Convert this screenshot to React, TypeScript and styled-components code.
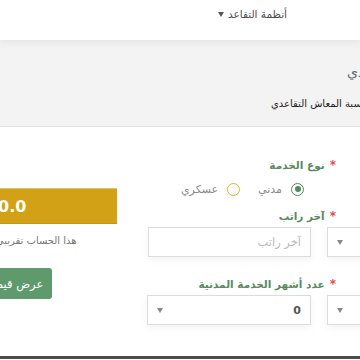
import React, { FC } from 'react';
import styled, { createGlobalStyle } from 'styled-components';

const GlobalStyle = createGlobalStyle`
  html, body {
    margin: 0;
    padding: 0;
    background: #ffffff;
  }
  body {
    font-family: "DejaVu Sans", "Noto Sans", sans-serif;
  }
`;

const Page = styled.div`
  position: relative;
  width: 360px;
  height: 360px;
  overflow: hidden;
  direction: rtl;
  background: #ffffff;
`;

const Header = styled.header`
  position: relative;
  z-index: 2;
  height: 40px;
  background: #ffffff;
  box-shadow: 0 2px 8px rgba(0, 0, 0, 0.07);
  display: flex;
  align-items: flex-start;
  padding-right: 73px;
  box-sizing: border-box;
`;

const NavItem = styled.div`
  display: flex;
  align-items: center;
  gap: 4px;
  margin-top: 6px;
  font-size: 10.5px;
  line-height: 16px;
  color: #4f4f4f;
`;

const Caret = styled.span`
  width: 0;
  height: 0;
  border-left: 3.5px solid transparent;
  border-right: 3.5px solid transparent;
  border-top: 5px solid #555555;
  margin-top: 1px;
`;

const TitleBand = styled.section`
  height: 87px;
  background: #f3f3f3;
  box-sizing: border-box;
  padding-top: 23px;
  border-bottom: 1px solid #e2e2e2;
`;

/* title whose start is cut by the right edge: anchored at its left end */
const TitleLine = styled.div<{ $left: number }>`
  direction: ltr;
  display: flex;
  padding-left: ${(p) => p.$left}px;
  white-space: nowrap;
`;

const Title = styled.span`
  flex-shrink: 0;
  direction: rtl;
  font-size: 14px;
  line-height: 18px;
  color: #5f6d7a;
`;

const SubTitle = styled.div`
  margin-top: 15px;
  margin-right: -11px;
  white-space: nowrap;
  font-size: 10px;
  line-height: 16px;
  color: #1f1f1f;
`;

const Panel = styled.main`
  height: 229px;
  background: #ffffff;
  display: flex;
  align-items: flex-start;
  gap: 30px;
`;

const FormCol = styled.div`
  flex-shrink: 0;
  width: 240px;
  margin-right: -27px;
  padding-top: 30px;
  display: flex;
  flex-direction: column;
`;

const Label = styled.div<{ $gap: number }>`
  margin-top: ${(p) => p.$gap}px;
  padding-right: 51px;
  font-size: 10.5px;
  line-height: 16px;
  font-weight: bold;
  color: #5b8a62;
  display: flex;
  align-items: center;
  gap: 5px;
`;

const Star = styled.span`
  color: #e24b4b;
  font-size: 12px;
`;

const RadioRow = styled.div`
  margin-top: 8px;
  padding-right: 83px;
  display: flex;
  align-items: center;
  gap: 18px;
  height: 16px;
`;

const Radio = styled.label`
  display: flex;
  align-items: center;
  gap: 9px;
  font-size: 11px;
  color: #888888;
`;

const RadioRing = styled.span<{ $color: string; $checked?: boolean }>`
  width: 11px;
  height: 11px;
  border-radius: 50%;
  border: 1.6px solid ${(p) => p.$color};
  display: flex;
  align-items: center;
  justify-content: center;

  &::after {
    content: '';
    display: ${(p) => (p.$checked ? 'block' : 'none')};
    width: 6px;
    height: 6px;
    border-radius: 50%;
    background: ${(p) => p.$color};
  }
`;

const FieldRow = styled.div`
  margin-top: 3px;
  display: flex;
  gap: 16px;
`;

const Box = styled.div<{ $width: number }>`
  width: ${(p) => p.$width}px;
  height: 30px;
  box-sizing: border-box;
  border: 1px solid #dcdcdc;
  background: #ffffff;
  box-shadow: 0 3px 8px rgba(0, 0, 0, 0.05);
  display: flex;
  align-items: center;
  justify-content: space-between;
  padding: 0 9px;
  font-size: 11px;
`;

const Placeholder = styled.span`
  color: #bbbbbb;
  font-size: 11.5px;
`;

const Value = styled.span`
  color: #555555;
  font-weight: bold;
`;

const Arrow = styled.span`
  width: 0;
  height: 0;
  border-left: 3px solid transparent;
  border-right: 3px solid transparent;
  border-top: 5px solid #888888;
`;

const ResultCol = styled.div`
  flex-shrink: 0;
  width: 240px;
  margin-top: 61px;
  display: flex;
  flex-direction: column;
  align-items: center;
`;

const ResultBox = styled.div`
  width: 100%;
  height: 36px;
  box-sizing: border-box;
  background: #d3a115;
  border-top: 1px solid #e4c266;
  border-bottom: 1px solid #c39510;
  display: flex;
  align-items: center;
  justify-content: center;
  gap: 4px;
  color: #ffffff;
  font-weight: bold;
`;

const Amount = styled.span`
  font-size: 16px;
  direction: ltr;
`;

const Currency = styled.span`
  font-size: 12px;
`;

const Note = styled.p`
  margin: 10px 0 0;
  font-size: 10px;
  line-height: 14px;
  color: #777777;
  white-space: nowrap;
`;

const ShowButton = styled.button`
  margin-top: 20px;
  width: 110px;
  height: 31px;
  border: none;
  border-radius: 3px;
  background: #5f9a6d;
  color: #ffffff;
  font-family: inherit;
  font-size: 11.5px;
  direction: rtl;
`;

const Footer = styled.div`
  height: 3px;
  background: #4d4d4d;
`;

const App: FC = () => {
  return (
    <>
      <GlobalStyle />
      <Page>
        <Header>
          <NavItem>
            أنظمة التقاعد
            <Caret />
          </NavItem>
        </Header>
        <TitleBand>
          <TitleLine $left={347}>
            <Title>التقاعدي</Title>
          </TitleLine>
          <SubTitle>حاسبة المعاش التقاعدي</SubTitle>
        </TitleBand>
        <Panel>
          <FormCol>
            <Label $gap={0}>
              <Star>*</Star>
              نوع الخدمة
            </Label>
            <RadioRow>
              <Radio>
                <RadioRing $color="#4f8b5e" $checked />
                مدني
              </Radio>
              <Radio>
                <RadioRing $color="#e0b62b" />
                عسكري
              </Radio>
            </RadioRow>
            <Label $gap={11}>
              <Star>*</Star>
              آخر راتب
            </Label>
            <FieldRow>
              <Box $width={60}>
                <span />
                <Arrow />
              </Box>
              <Box $width={163}>
                <Placeholder>آخر راتب</Placeholder>
              </Box>
            </FieldRow>
            <Label $gap={19}>
              <Star>*</Star>
              عدد أشهر الخدمة المدنية
            </Label>
            <FieldRow>
              <Box $width={60}>
                <span />
                <Arrow />
              </Box>
              <Box $width={164}>
                <Value>0</Value>
                <Arrow />
              </Box>
            </FieldRow>
          </FormCol>
          <ResultCol>
            <ResultBox>
              <Amount>0.0</Amount>
              <Currency>ريال</Currency>
            </ResultBox>
            <Note>هذا الحساب تقريبي بشكل مبدئي فقط</Note>
            <ShowButton>عرض قيمة المعاش</ShowButton>
          </ResultCol>
        </Panel>
        <Footer />
      </Page>
    </>
  );
};

export default App;
